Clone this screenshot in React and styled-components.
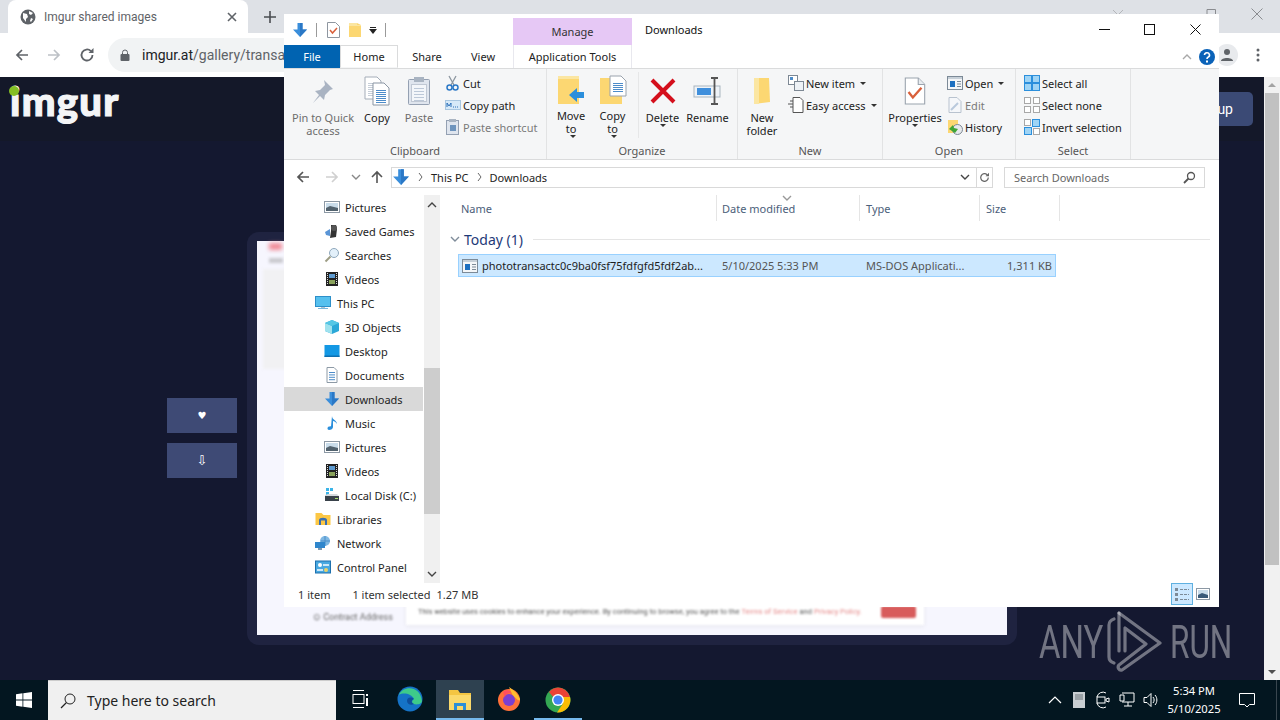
import React from 'react';
import styled, { createGlobalStyle } from 'styled-components';

const Global = createGlobalStyle`
  html, body { margin: 0; padding: 0; overflow: hidden; background: #141829; }
  * { box-sizing: border-box; }
`;

const uiFont = '"Noto Sans", "Open Sans", sans-serif';
const chromeFont = 'Roboto, "Liberation Sans", sans-serif';

const Screen = styled.div`
  position: relative;
  width: 1280px;
  height: 720px;
  display: flex;
  flex-direction: column;
  overflow: hidden;
`;

/* browser behind the explorer window */
const Browser = styled.div`
  height: 680px;
  display: flex;
  flex-direction: column;
  font-family: ${chromeFont};
`;
const TabStrip = styled.div`
  height: 33px;
  background: #dee1e6;
  display: flex;
  align-items: stretch;
  padding-left: 8px;
  position: relative;
`;
const Tab = styled.div`
  width: 240px;
  background: #fff;
  border-radius: 8px 8px 0 0;
  display: flex;
  align-items: center;
  padding: 0 11px 0 12px;
  gap: 8px;
  color: #5f6368;
  font-size: 12px;
`;
const TabTitle = styled.span`
  flex: 1;
`;
const NewTab = styled.div`
  width: 44px;
  display: flex;
  align-items: center;
  justify-content: center;
`;
const WinPeek = styled.div`
  margin: 9px ${p => p.$mr}px 0 ${p => (p.$first ? 'auto' : '0')};
  height: 6px;
  display: flex;
`;
const WinClose = styled.div`
  width: 46px;
  display: flex;
  align-items: center;
  justify-content: center;
  padding-bottom: 6px;
`;
const Toolbar = styled.div`
  height: 44px;
  background: #fff;
  display: flex;
  align-items: center;
  padding: 0 20px 0 15px;
`;
const NavIcon = styled.div`
  width: 32px;
  display: flex;
  justify-content: flex-start;
  align-items: center;
`;
const UrlPill = styled.div`
  margin-left: -3px;
  flex: 1;
  height: 34px;
  border-radius: 17px;
  background: #f1f3f4;
  display: flex;
  align-items: center;
  padding-left: 12px;
  gap: 12px;
  font-size: 14px;
  color: #202124;
`;
const UrlRest = styled.span`
  color: #5f6368;
`;
const Avatar = styled.div`
  width: 22px;
  height: 22px;
  margin: 0 18px 0 8px;
  border-radius: 50%;
  background: #e8eaed;
  display: flex;
  align-items: center;
  justify-content: center;
`;
const Page = styled.div`
  flex: 1;
  display: flex;
  background: #141830;
  min-height: 0;
`;
const PageBody = styled.div`
  flex: 1;
  display: flex;
  flex-direction: column;
  min-width: 0;
`;
const PageHeader = styled.div`
  height: 64px;
  background: #141829;
  display: flex;
  align-items: flex-start;
  justify-content: space-between;
  padding: 9px 11px 0 10px;
`;
const Logo = styled.div`
  position: relative;
  font-family: Lato, sans-serif;
  font-weight: 900;
  font-size: 40px;
  line-height: 30px;
  color: #f4f5f7;
  letter-spacing: 1.3px;
  -webkit-text-stroke: 1.2px #f4f5f7;
`;
const LogoDot = styled.i`
  position: absolute;
  left: -1px;
  top: 0;
  width: 10px;
  height: 10px;
  border-radius: 50%;
  background: #85bf25;
`;
const SignUp = styled.div`
  width: 90px;
  height: 34px;
  margin-top: 6px;
  border-radius: 5px;
  background: #3b4a75;
  color: #fff;
  font-size: 14px;
  display: flex;
  align-items: center;
  justify-content: flex-end;
  padding-right: 20px;
`;
const PageMain = styled.div`
  flex: 1;
  display: flex;
  padding: 91px 0 35px 167px;
`;
const SideButtons = styled.div`
  width: 70px;
  display: flex;
  flex-direction: column;
  gap: 10px;
  margin-top: 166px;
`;
const SideButton = styled.div`
  height: 35px;
  background: #3e4a75;
  color: #fff;
  font-size: ${p => p.$fs}px;
  font-family: "DejaVu Sans", sans-serif;
  display: flex;
  align-items: center;
  justify-content: center;
`;
const Card = styled.div`
  width: 770px;
  margin-left: 10px;
  border-radius: 12px;
  background: #1f2340;
  padding: 9px 10px 10px;
  display: flex;
`;
const Shot = styled.div`
  flex: 1;
  background: #f6f6fe;
  display: flex;
  flex-direction: column;
  padding: 2px 0 10px;
  font-family: ${chromeFont};
`;
const Blob = styled.div`
  width: ${p => p.$w}px;
  height: ${p => p.$h}px;
  background: ${p => p.$c};
  margin: 0 0 ${p => p.$mb || 0}px ${p => p.$ml}px;
  filter: blur(${p => p.$b || 1.5}px);
`;
const ShotBottom = styled.div`
  margin-top: auto;
  display: flex;
  align-items: flex-end;
  padding-left: 56px;
`;
const BlurLabel = styled.div`
  font-size: 9px;
  color: #666;
  width: 93px;
  filter: blur(0.8px);
  padding-bottom: 3px;
`;
const Cookie = styled.div`
  width: 518px;
  height: 27px;
  background: #fff;
  box-shadow: 0 1px 5px rgba(0, 0, 0, 0.08);
  display: flex;
  align-items: center;
  padding: 0 8px 0 12px;
  font-size: 7.5px;
  color: #555;
  filter: blur(0.8px);
  white-space: nowrap;
`;
const CookieLink = styled.span`
  color: #e58a8a;
  margin: 0 2px;
`;
const CookieBtn = styled.div`
  width: 35px;
  height: 12px;
  margin-left: auto;
  background: #d85c5c;
  border-radius: 2px;
`;
const PageScroll = styled.div`
  width: 16px;
  background: #f1f1f1;
  display: flex;
  flex-direction: column;
  align-items: center;
  padding-top: 6px;
`;
const PageThumb = styled.div`
  width: 14px;
  height: 472px;
  margin-top: 6px;
  background: #c1c1c1;
`;
const PageArrow = styled.div`
  width: 0;
  height: 0;
  border-left: 4px solid transparent;
  border-right: 4px solid transparent;
  ${p => (p.$down ? 'border-top: 4px solid #505050; margin-top: auto; margin-bottom: 6px;' : 'border-bottom: 4px solid #a3a3a3;')}
`;

/* watermark */
const Watermark = styled.div`
  position: absolute;
  left: 1039px;
  top: 610px;
  width: 191px;
  height: 62px;
  display: flex;
  align-items: center;
  justify-content: space-between;
  font-family: Roboto, sans-serif;
  font-weight: 400;
  font-size: 47px;
  color: rgba(255, 255, 255, 0.4);
  pointer-events: none;
`;
const Narrow = styled.span`
  display: inline-block;
  transform: scaleX(${p => p.$x});
  transform-origin: left center;
  width: ${p => p.$w}px;
  white-space: nowrap;
`;

/* explorer */
const Explorer = styled.div`
  position: absolute;
  left: 284px;
  top: 14px;
  width: 935px;
  height: 593px;
  background: #fff;
  font-family: ${uiFont};
  font-size: 11px;
  color: #1e1e1e;
  display: flex;
  flex-direction: column;
`;
const TitleBar = styled.div`
  height: 31px;
  display: flex;
  align-items: flex-start;
`;
const QuickAccess = styled.div`
  width: 229px;
  height: 31px;
  display: flex;
  align-items: center;
  padding: 1px 0 0 8px;
`;
const QaSlot = styled.div`
  width: ${p => p.$w}px;
  display: flex;
  align-items: center;
  justify-content: center;
`;
const QaSep = styled.div`
  width: 1px;
  height: 14px;
  background: #9a9a9a;
  margin: 0 ${p => p.$m}px;
`;
const ManageTab = styled.div`
  width: 119px;
  height: 27px;
  margin-top: 4px;
  background: #e6c8f5;
  display: flex;
  align-items: center;
  justify-content: center;
  color: #333;
`;
const TitleText = styled.div`
  margin: 8px 0 0 13px;
  color: #111;
`;
const WinControls = styled.div`
  margin-left: auto;
  display: flex;
  margin-right: 1px;
`;
const WinBtn = styled.div`
  width: 45.5px;
  height: 31px;
  display: flex;
  align-items: center;
  justify-content: center;
`;
const RibbonTabs = styled.div`
  height: 23px;
  display: flex;
  align-items: stretch;
`;
const RibbonTab = styled.div`
  width: ${p => p.$w}px;
  display: flex;
  align-items: center;
  justify-content: center;
  color: ${p => (p.$file ? '#fff' : '#222')};
  background: ${p => (p.$file ? '#0063b1' : '#fff')};
  border: ${p => (p.$active ? '1px solid #dadbdc' : 'none')};
  border-bottom: ${p => (p.$active ? '1px solid #f5f6f7' : 'none')};
  ${p => p.$gap && 'margin-left: 3px; border-left: 1px solid #e8e8ee; border-right: 1px solid #e8e8ee;'}
`;
const RibbonRight = styled.div`
  margin-left: auto;
  display: flex;
  align-items: center;
  gap: 7px;
  padding-right: 4px;
`;
const Ribbon = styled.div`
  height: 92px;
  background: #f5f6f7;
  border-bottom: 1px solid #dadbdc;
  border-top: 1px solid #dadbdc;
  display: flex;
`;
const Group = styled.div`
  width: ${p => p.$w}px;
  display: flex;
  flex-direction: column;
  border-right: 1px solid #e2e3e4;
`;
const GroupBody = styled.div`
  height: 74px;
  display: flex;
  padding: 3px 0 0 ${p => p.$pl || 0}px;
`;
const GroupLabel = styled.div`
  text-align: center;
  color: #555;
  line-height: 16px;
`;
const BigBtn = styled.div`
  width: ${p => p.$w}px;
  display: flex;
  flex-direction: column;
  align-items: center;
  text-align: center;
  line-height: 13px;
  white-space: nowrap;
  color: ${p => (p.$dim ? '#6d6d6d' : '#222')};
  ${p => p.$sep && 'border-right: 1px solid #e6e7e8; padding-right: 4px;'}
  height: 66px;
`;
const BigIcon = styled.div`
  height: 38px;
  display: flex;
  align-items: center;
  justify-content: center;
  margin-bottom: 1px;
`;
const Caret = styled.span`
  display: inline-block;
  width: 0;
  height: 0;
  border-left: 3px solid transparent;
  border-right: 3px solid transparent;
  border-top: 3px solid #333;
  vertical-align: middle;
  margin-left: ${p => p.$ml ?? 3}px;
`;
const SmallCol = styled.div`
  display: flex;
  flex-direction: column;
  margin-left: ${p => p.$ml || 0}px;
`;
const SmallBtn = styled.div`
  height: 22px;
  display: flex;
  align-items: center;
  gap: 2px;
  white-space: nowrap;
  color: ${p => (p.$dim ? '#7a7a7a' : '#222')};
`;
const SmallIcon = styled.div`
  width: 17px;
  height: 16px;
  display: flex;
  align-items: center;
  justify-content: center;
`;
const AddressRow = styled.div`
  height: 35px;
  display: flex;
  align-items: center;
  padding-bottom: 1px;
`;
const AddrNav = styled.div`
  width: ${p => p.$w}px;
  display: flex;
  justify-content: center;
`;
const AddrBox = styled.div`
  width: 586px;
  height: 21px;
  margin-left: 7px;
  border: 1px solid #d9d9d9;
  display: flex;
  align-items: center;
  gap: 8px;
`;
const Crumb = styled.span`
  color: #222;
`;
const AddrEnd = styled.div`
  margin-left: auto;
  width: 22px;
  display: flex;
  justify-content: center;
`;
const Refresh = styled.div`
  width: 16px;
  height: 21px;
  border: 1px solid #d9d9d9;
  border-left: none;
  display: flex;
  align-items: center;
  justify-content: center;
`;
const SearchBox = styled.div`
  width: 201px;
  height: 21px;
  margin-left: 11px;
  border: 1px solid #d9d9d9;
  display: flex;
  align-items: center;
  justify-content: space-between;
  padding: 0 8px 0 9px;
  color: #666;
`;
const Content = styled.div`
  flex: 1;
  display: flex;
  min-height: 0;
`;
const NavPane = styled.div`
  width: 140px;
  padding-right: 1px;
`;
const NavRow = styled.div`
  height: 24px;
  display: flex;
  align-items: center;
  padding-left: ${p => (p.$sub ? 40 : 31)}px;
  gap: ${p => (p.$sub ? 5 : 6)}px;
  background: ${p => (p.$on ? '#d9d9d9' : 'transparent')};
  white-space: nowrap;
`;
const NavScroll = styled.div`
  width: 16px;
  background: #f0f0f0;
  display: flex;
  flex-direction: column;
  align-items: center;
  padding: 7px 0 6px;
`;
const NavThumb = styled.div`
  width: 16px;
  height: 146px;
  margin-top: 160px;
  background: #cdcdcd;
`;
const NavDown = styled.div`
  margin-top: auto;
  display: flex;
`;
const ListPane = styled.div`
  flex: 1;
`;
const HeaderRow = styled.div`
  height: 26px;
  display: grid;
  grid-template-columns: 277px 143px 120px 80px;
  color: #4c607a;
  position: relative;
`;
const HeaderCell = styled.div`
  display: flex;
  align-items: center;
  padding-left: ${p => p.$pl}px;
  border-right: 1px solid #e5e5e5;
`;
const SortMark = styled.div`
  position: absolute;
  left: 342px;
  top: 0;
  display: flex;
`;
const GroupRow = styled.div`
  height: 26px;
  display: flex;
  align-items: center;
  margin-top: 5px;
  padding: 0 9px 0 10px;
  gap: 4px;
`;
const GroupName = styled.span`
  font-size: 14px;
  color: #1e3a78;
  white-space: nowrap;
`;
const GroupLine = styled.div`
  flex: 1;
  height: 1px;
  background: #e5e5e5;
  margin-left: 6px;
`;
const FileRow = styled.div`
  width: 598px;
  height: 23px;
  margin: 2px 0 0 18px;
  background: #cce8ff;
  border: 1px solid #99d1ff;
  display: grid;
  grid-template-columns: 263px 144px 120px 1fr;
  align-items: center;
  white-space: nowrap;
`;
const FileName = styled.div`
  display: flex;
  align-items: center;
  gap: 4px;
  padding-left: 3px;
  overflow: hidden;
`;
const FileMeta = styled.div`
  color: #555;
  text-align: ${p => (p.$right ? 'right' : 'left')};
  padding-right: ${p => (p.$right ? 3 : 0)}px;
`;
const StatusBar = styled.div`
  height: 24px;
  display: flex;
  align-items: center;
  padding: 0 8px 2px 14px;
  color: #333;
`;
const StatusItem = styled.span`
  margin-right: ${p => p.$mr}px;
`;
const ViewBtn = styled.div`
  width: ${p => p.$w}px;
  height: 22px;
  display: flex;
  align-items: center;
  justify-content: center;
  margin-left: ${p => (p.$on ? 'auto' : '2px')};
  background: ${p => (p.$on ? '#cce8ff' : 'transparent')};
  border: ${p => (p.$on ? '1px solid #5fb0e0' : 'none')};
`;

/* taskbar */
const Taskbar = styled.div`
  height: 40px;
  background: #031620;
  display: flex;
  align-items: stretch;
  color: #fff;
`;
const StartBtn = styled.div`
  width: 48px;
  display: flex;
  align-items: center;
  justify-content: center;
`;
const SearchBar = styled.div`
  width: 288px;
  background: #f0f0f0;
  border-top: 1px solid #ccc;
  display: flex;
  align-items: center;
  padding-left: 12px;
  gap: 11px;
  color: #222;
  font-family: ${uiFont};
  font-size: 14px;
`;
const TaskItem = styled.div`
  width: ${p => p.$w || 48}px;
  display: flex;
  align-items: center;
  justify-content: center;
  background: ${p => (p.$on ? '#2e4150' : 'transparent')};
  border-bottom: 2px solid ${p => (p.$mark ? '#76b9ed' : 'transparent')};
  padding-top: ${p => (p.$mark ? 2 : 0)}px;
`;
const Tray = styled.div`
  margin-left: auto;
  display: flex;
  align-items: center;
  padding-right: 3px;
`;
const TrayIcon = styled.div`
  width: 24px;
  display: flex;
  justify-content: center;
`;
const Clock = styled.div`
  width: 62px;
  text-align: center;
  font-family: ${uiFont};
  font-size: 11.2px;
  line-height: 18px;
`;
const Notify = styled.div`
  width: 44px;
  display: flex;
  justify-content: center;
  height: 40px;
  align-items: center;
`;
const ShowDesktop = styled.div`
  width: 8px;
  height: 40px;
  border-right: 1px solid #39464f;
`;

const Ico = ({ w = 16, h = 16, children }) => (
  <svg width={w} height={h} viewBox={`0 0 ${w} ${h}`} fill="none">{children}</svg>
);

const DownArrow = ({ s = 16 }) => (
  <svg width={s} height={s} viewBox="0 0 16 16">
    <path d="M5.500 1h5v6.500H15L8 15 1 7.500h4.500z" fill="#3a8edb" />
    <path d="M8 1h2.500v6.500H15L8 15z" fill="#2b78c6" />
  </svg>
);
const Folder = ({ w = 14, h = 16 }) => (
  <svg width={w} height={h} viewBox="0 0 14 16">
    <path d="M1 1h8l4 2v12H1z" fill="#fcd772" />
    <path d="M1 1h8v2h4v1H1z" fill="#fbe6a2" />
  </svg>
);
const PageSheet = ({ children, w = 20, h = 26 }) => (
  <svg width={w} height={h} viewBox="0 0 20 26">
    <path d="M1 1h12l6 6v18H1z" fill="#fff" stroke="#9aa3ad" />
    <path d="M13 1v6h6" fill="#e8ecf0" stroke="#9aa3ad" />
    {children}
  </svg>
);
const Lines = ({ x, y, n, w = 10, c = '#7fa7cf', gap = 2 }) => (
  <g>
    {Array.from({ length: n }).map((_, i) => (
      <rect key={i} x={x} y={y + i * gap} width={w} height="1" fill={c} />
    ))}
  </g>
);
const CopyIcon = () => (
  <svg width="26" height="30" viewBox="0 0 26 30">
    <path d="M1 1h12l4 4v18H1z" fill="#fff" stroke="#a4adb8" />
    <Lines x={4} y={7} n={7} w={9} c="#c6ced8" />
    <path d="M9 7h11l5 5v17H9z" fill="#fff" stroke="#8a95a3" />
    <Lines x={12} y={14} n={7} w={10} c="#4d8cc9" />
  </svg>
);
const PasteIcon = () => (
  <svg width="24" height="30" viewBox="0 0 24 30">
    <rect x="1.500" y="3.500" width="21" height="25" rx="1" fill="#dfe5ee" stroke="#94a0b2" />
    <rect x="7" y="1" width="10" height="5" fill="#a9b4c2" />
    <rect x="4.500" y="8.500" width="15" height="17" fill="#f3f6fa" stroke="#c0c8d4" />
    <Lines x={7} y={12} n={5} w={10} c="#bcc8d8" gap={3} />
  </svg>
);

const navIcons = {
  pictures: (
    <Ico>
      <rect x=".5" y="2.500" width="15" height="11" fill="#fff" stroke="#8c98a4" />
      <rect x="2" y="4" width="12" height="8" fill="#c9dcea" />
      <path d="M2 9l4-2 8 2v3H2z" fill="#52626e" />
    </Ico>
  ),
  games: (
    <Ico>
      <path d="M1 9l5-3v7l-4-1z" fill="#5a95d6" />
      <path d="M7 2h5l1 4-1 8-6 1 1-7z" fill="#333" />
      <circle cx="10" cy="5" r="3" fill="#555" />
    </Ico>
  ),
  search: (
    <Ico>
      <circle cx="10" cy="6" r="4.500" fill="#e3f0fa" stroke="#8fa8bc" />
      <path d="M6.500 9.500L1.500 14.500" stroke="#9d9d85" strokeWidth="2" />
    </Ico>
  ),
  videos: (
    <Ico>
      <rect x="2" y="1" width="12" height="14" fill="#222" />
      <rect x="5" y="3" width="6" height="4" fill="#5e9bd1" />
      <rect x="5" y="9" width="6" height="4" fill="#8aa35b" />
      <Lines x={3} y={2} n={6} w={1} c="#ddd" gap={2} />
      <Lines x={12} y={2} n={6} w={1} c="#ddd" gap={2} />
    </Ico>
  ),
  pc: (
    <Ico>
      <rect x=".5" y="1.500" width="15" height="10" fill="#56c0ee" stroke="#2d8fc9" />
      <rect x="3" y="13" width="10" height="1" fill="#79b6db" />
      <rect x="6" y="12" width="4" height="1" fill="#b5c5d0" />
    </Ico>
  ),
  objects: (
    <Ico>
      <path d="M8 1l7 3v8l-7 3-7-3V4z" fill="#2ba8d8" />
      <path d="M1 4l7 3v8l-7-3z" fill="#9fe2ee" />
      <path d="M8 1l7 3-7 3-7-3z" fill="#55c7e5" />
    </Ico>
  ),
  desktop: (
    <Ico>
      <rect x=".5" y="2" width="15" height="12" fill="#1398e4" />
      <rect x=".5" y="12.500" width="15" height="1.500" fill="#0d6fb0" />
    </Ico>
  ),
  documents: (
    <Ico>
      <path d="M3 .5h7l3 3v12H3z" fill="#fff" stroke="#8d9aa6" />
      <Lines x={5} y={5} n={4} w={6} c="#4d8cc9" gap={2.400} />
    </Ico>
  ),
  downloads: <DownArrow />,
  music: (
    <Ico>
      <path d="M8 1c0 4 5 4 5 8-1-2-3-3-4-3v6c0 2-2 3-4 3s-2-3 0-3.500c1-.3 2-.3 2-.3z" fill="#2b8fdc" />
    </Ico>
  ),
  disk: (
    <Ico>
      <rect x="2" y="1" width="3" height="3" fill="#3ab4e8" />
      <rect x="6" y="1" width="3" height="3" fill="#3ab4e8" />
      <rect x="2" y="5" width="3" height="3" fill="#3ab4e8" />
      <path d="M1 9h14v5H1z" fill="#39424a" />
      <path d="M1 8l3-1h9l2 2H1z" fill="#d5dade" />
      <rect x="11" y="11" width="3" height="1" fill="#a8e070" />
    </Ico>
  ),
  libraries: (
    <Ico>
      <path d="M.5 2h6l2 2h7v10H.5z" fill="#fcc745" />
      <path d="M4 14V9c0-3 8-3 8 0v5h-2V9.500H6V14z" fill="#3a6fb0" />
    </Ico>
  ),
  network: (
    <Ico>
      <circle cx="10" cy="6" r="5" fill="#7fb8e3" />
      <path d="M6 6h9M10 1v10" stroke="#4a8dc8" />
      <rect x="0" y="7" width="10" height="6" fill="#2f86cc" />
      <rect x="3" y="13" width="4" height="2" fill="#7b98b0" />
    </Ico>
  ),
  panel: (
    <Ico>
      <rect x=".5" y="2" width="15" height="12" fill="#48a8e0" stroke="#1e70ad" />
      <circle cx="5" cy="6" r="2" fill="#fff" />
      <rect x="8" y="5" width="6" height="2" fill="#cde8f8" />
      <circle cx="11" cy="11" r="2" fill="#e9d26a" />
      <rect x="2" y="10" width="6" height="2" fill="#cde8f8" />
    </Ico>
  ),
};

const navItems = [
  ['pictures', 'Pictures', 1],
  ['games', 'Saved Games', 1],
  ['search', 'Searches', 1],
  ['videos', 'Videos', 1],
  ['pc', 'This PC', 0],
  ['objects', '3D Objects', 1],
  ['desktop', 'Desktop', 1],
  ['documents', 'Documents', 1],
  ['downloads', 'Downloads', 1, true],
  ['music', 'Music', 1],
  ['pictures', 'Pictures', 1],
  ['videos', 'Videos', 1],
  ['disk', 'Local Disk (C:)', 1],
  ['libraries', 'Libraries', 0],
  ['network', 'Network', 0],
  ['panel', 'Control Panel', 0],
];

const Chevron = ({ up, c = '#555' }) => (
  <svg width="10" height="6" viewBox="0 0 10 6">
    <path d={up ? 'M1 5l4-4 4 4' : 'M1 1l4 4 4-4'} stroke={c} strokeWidth="1.400" fill="none" />
  </svg>
);
const Chevronlet = () => (
  <svg width="5" height="8" viewBox="0 0 5 8">
    <path d="M1 0l3 4-3 4" stroke="#666" fill="none" />
  </svg>
);
const ArrowLeft = ({ c, s = 14 }) => (
  <svg width={s} height={s} viewBox="0 0 14 14">
    <path d="M13 7H2M7 2L2 7l5 5" stroke={c} strokeWidth="1.700" fill="none" />
  </svg>
);
const ArrowRight = ({ c, s = 14 }) => (
  <svg width={s} height={s} viewBox="0 0 14 14">
    <path d="M1 7h11M7 2l5 5-5 5" stroke={c} strokeWidth="1.700" fill="none" />
  </svg>
);
const Reload = ({ c = '#5f6368', s = 16 }) => (
  <svg width={s} height={s} viewBox="0 0 16 16">
    <path d="M13.500 8a5.500 5.500 0 1 1-1.600-3.900" stroke={c} strokeWidth="1.800" fill="none" />
    <path d="M14.500 1v5h-5z" fill={c} />
  </svg>
);
const ExeIcon = () => (
  <svg width="16" height="14" viewBox="0 0 16 14">
    <rect x=".5" y=".5" width="15" height="13" fill="#f4f6f8" stroke="#7c8a97" />
    <rect x="1" y="1" width="14" height="2" fill="#c7d0d8" />
    <rect x="3" y="5" width="5" height="6" fill="#1c6fc0" />
    <Lines x={10} y={5} n={3} w={4} c="#7c8a97" gap={2.500} />
  </svg>
);

function App() {
  return (
    <Screen>
      <Global />
      <Browser>
        <TabStrip>
          <Tab>
            <svg width="16" height="16" viewBox="0 0 16 16">
              <circle cx="8" cy="8" r="7.500" fill="#5f6368" />
              <path d="M3 4l4 1 1 3-2 2v3L3 9zM9 2l4 2-2 2-2-1zM11 9l2 1-2 3-1-1z" fill="#fff" />
            </svg>
            <TabTitle>Imgur shared images</TabTitle>
            <svg width="10" height="10" viewBox="0 0 10 10">
              <path d="M1 1l8 8M9 1l-8 8" stroke="#5f6368" strokeWidth="1.600" />
            </svg>
          </Tab>
          <NewTab>
            <svg width="12" height="12" viewBox="0 0 12 12">
              <path d="M6 0v12M0 6h12" stroke="#4a4d52" strokeWidth="1.600" />
            </svg>
          </NewTab>
          <WinPeek $first $mr={82}>
            <svg width="10" height="6" viewBox="0 0 10 6">
              <path d="M0 1l4 4M10 1L6 5" stroke="#b4b6ba" />
            </svg>
          </WinPeek>
          <WinPeek $mr={18}>
            <svg width="11" height="6" viewBox="0 0 11 6">
              <path d="M2 6V.5h8.500V6" stroke="#8a8c90" fill="none" />
            </svg>
          </WinPeek>
          <WinClose>
            <svg width="12" height="12" viewBox="0 0 12 12">
              <path d="M.5.5l11 11M11.500.5l-11 11" stroke="#8a8c90" />
            </svg>
          </WinClose>
        </TabStrip>
        <Toolbar>
          <NavIcon><ArrowLeft c="#5f6368" /></NavIcon>
          <NavIcon><ArrowRight c="#bdc1c6" /></NavIcon>
          <NavIcon><Reload /></NavIcon>
          <UrlPill>
            <svg width="10" height="12" viewBox="0 0 10 12">
              <path d="M2.500 5V3.500a2.500 2.500 0 0 1 5 0V5" stroke="#5f6368" fill="none" />
              <rect x="0.500" y="5" width="9" height="7" rx="1" fill="#5f6368" />
            </svg>
            <span>imgur.at<UrlRest>/gallery/transa</UrlRest></span>
          </UrlPill>
          <Avatar>
            <svg width="14" height="14" viewBox="0 0 14 14">
              <circle cx="7" cy="4" r="3" fill="#5f6368" />
              <path d="M1 13c0-4 12-4 12 0z" fill="#5f6368" />
            </svg>
          </Avatar>
          <svg width="4" height="14" viewBox="0 0 4 14">
            <circle cx="2" cy="2" r="1.500" fill="#5f6368" />
            <circle cx="2" cy="7" r="1.500" fill="#5f6368" />
            <circle cx="2" cy="12" r="1.500" fill="#5f6368" />
          </svg>
        </Toolbar>
        <Page>
          <PageBody>
            <PageHeader>
              <Logo>
                imgur
                <LogoDot />
              </Logo>
              <SignUp>up</SignUp>
            </PageHeader>
            <PageMain>
              <SideButtons>
                <SideButton $fs={10}>♥</SideButton>
                <SideButton $fs={13}>⇩</SideButton>
              </SideButtons>
              <Card>
                <Shot>
                  <Blob $ml={12} $w={13} $h={7} $c="#f08a96" $mb={8} $b={2} />
                  <Blob $ml={12} $w={14} $h={5} $c="#c9c9ce" $mb={6} />
                  <Blob $ml={6} $w={30} $h={100} $c="#f1f1f3" />
                  <ShotBottom>
                    <BlurLabel>⊙ Contract Address</BlurLabel>
                    <Cookie>
                      This website uses cookies to enhance your experience. By continuing to browse, you agree to the
                      <CookieLink>Terms of Service</CookieLink> and <CookieLink>Privacy Policy.</CookieLink>
                      <CookieBtn />
                    </Cookie>
                  </ShotBottom>
                </Shot>
              </Card>
            </PageMain>
          </PageBody>
          <PageScroll>
            <PageArrow />
            <PageThumb />
            <PageArrow $down />
          </PageScroll>
        </Page>
      </Browser>

      <Taskbar>
        <StartBtn>
          <svg width="16" height="16" viewBox="0 0 16 16">
            <path d="M0 2.200l6.500-.9v6.300H0zM7.300 1.200L16 0v7.600H7.300zM0 8.400h6.500v6.300L0 13.800zM7.300 8.400H16V16l-8.700-1.200z" fill="#fff" />
          </svg>
        </StartBtn>
        <SearchBar>
          <svg width="16" height="16" viewBox="0 0 16 16">
            <circle cx="10" cy="6" r="5" stroke="#222" fill="none" />
            <path d="M6.500 9.500L1 15" stroke="#222" strokeWidth="1.200" />
          </svg>
          Type here to search
        </SearchBar>
        <TaskItem $w={48}>
          <svg width="16" height="18" viewBox="0 0 16 18">
            <path d="M1 .5h11M1 17.500h11" stroke="#fff" />
            <rect x="1" y="4.500" width="11" height="9" stroke="#fff" fill="none" />
            <rect x="14" y="4" width="2" height="2" fill="#fff" />
            <rect x="14" y="8" width="2" height="8" fill="#fff" />
          </svg>
        </TaskItem>
        <TaskItem $w={52}>
          <svg width="26" height="26" viewBox="0 0 26 26">
            <circle cx="13" cy="13" r="12.500" fill="#1573c7" />
            <path d="M2 9c3-9 21-11 23 6 0 3-5 4-8 3-3-1-2-4 0-5-2-5-11-7-15-4z" fill="#3ecb8a" />
            <path d="M10 15c0-3 3-5 7-2-3 1-3 4 0 5-3 2-7 0-7-3z" fill="#0e4f9c" />
          </svg>
        </TaskItem>
        <TaskItem $w={48} $on $mark>
          <svg width="24" height="22" viewBox="0 0 24 22">
            <path d="M1 1h9l2 3h11v17H1z" fill="#f4c542" />
            <path d="M1 6h22v15H1z" fill="#fbd96b" />
            <path d="M6 21v-7h12v7h-3v-4H9v4z" fill="#2c8fd8" />
          </svg>
        </TaskItem>
        <TaskItem $w={50}>
          <svg width="24" height="26" viewBox="0 0 24 26">
            <circle cx="12" cy="14" r="11" fill="#ff7139" />
            <path d="M12 1c5 3 9 7 11 12 0 4-4-1-7-3z" fill="#ffbd30" />
            <circle cx="12" cy="14" r="6" fill="#7b3fd0" />
            <path d="M6 6c3-3 7-2 8 1-3 0-6 1-6 5z" fill="#ff4f5e" />
          </svg>
        </TaskItem>
        <TaskItem $w={48} $mark>
          <svg width="26" height="26" viewBox="0 0 26 26">
            <circle cx="13" cy="13" r="12.500" fill="#34a853" />
            <path d="M13 .5A12.500 12.500 0 0 1 25 10H13a3 3 0 0 0-4 1L4 5A12.500 12.500 0 0 1 13 .5z" fill="#ea4335" />
            <path d="M25 10a12.500 12.500 0 0 1-13 15.500l6-9 -5-6.500z" fill="#fbbc05" />
            <circle cx="13" cy="13" r="6" fill="#fff" />
            <circle cx="13" cy="13" r="4.600" fill="#4285f4" />
          </svg>
        </TaskItem>
        <Tray>
          <TrayIcon>
            <svg width="14" height="8" viewBox="0 0 14 8">
              <path d="M1 7l6-6 6 6" stroke="#fff" strokeWidth="1.200" fill="none" />
            </svg>
          </TrayIcon>
          <TrayIcon>
            <svg width="12" height="16" viewBox="0 0 12 16">
              <rect width="12" height="16" fill="#c9ced2" />
              <rect x="2" y="2" width="8" height="6" fill="#9aa1a6" />
            </svg>
          </TrayIcon>
          <TrayIcon>
            <svg width="14" height="18" viewBox="0 0 14 18">
              <path d="M1 6a6 6 0 0 1 9-4M1 12a6 6 0 0 0 9 4" stroke="#fff" fill="none" />
              <rect x="1" y="6" width="8" height="6" stroke="#fff" fill="none" />
              <path d="M10 8l3-1v4l-3-1z" stroke="#fff" fill="none" />
            </svg>
          </TrayIcon>
          <TrayIcon>
            <svg width="16" height="16" viewBox="0 0 16 16">
              <path d="M3 1h12v9H3M1 3h4v6H1zM9 10v4M5 14h8" stroke="#fff" fill="none" />
            </svg>
          </TrayIcon>
          <TrayIcon>
            <svg width="16" height="14" viewBox="0 0 16 14">
              <path d="M1 4.500h3l4-4v13l-4-4H1zM10 4c1.500 2 1.500 4 0 6M12 2c2.500 3 2.500 7 0 10" stroke="#fff" fill="none" />
            </svg>
          </TrayIcon>
          <Clock>5:34 PM<br />5/10/2025</Clock>
          <Notify>
            <svg width="16" height="16" viewBox="0 0 16 16">
              <path d="M.5 1.500h15v11h-5L8 15l-2.500-2.500h-5z" stroke="#fff" fill="none" />
            </svg>
          </Notify>
          <ShowDesktop />
        </Tray>
      </Taskbar>

      <Watermark>
        <Narrow $x={0.7} $w={62}>ANY</Narrow>
        <svg width="62" height="62" viewBox="0 0 62 62" fill="none" stroke="rgba(255,255,255,.4)" strokeWidth="3.200" strokeLinejoin="round" strokeLinecap="round">
          <path d="M9 9C6 10 4 12 4 15v32c0 3 2 5 5 6" />
          <path d="M14 3l41 30-38 27c-3 1-5-3-3-5l27-21L20 18v23" />
          <path d="M14 3v38" />
        </svg>
        <Narrow $x={0.67} $w={60}>RUN</Narrow>
      </Watermark>

      <Explorer>
        <TitleBar>
          <QuickAccess>
            <QaSlot $w={16}><DownArrow /></QaSlot>
            <QaSep $m={8} />
            <QaSlot $w={16}>
              <svg width="13" height="16" viewBox="0 0 13 16">
                <path d="M.5.5h8l4 4v11H.5z" fill="#fff" stroke="#8e96a0" />
                <path d="M3 8l2.500 3L10 6" stroke="#d9603b" strokeWidth="1.500" fill="none" />
              </svg>
            </QaSlot>
            <QaSlot $w={28}><Folder /></QaSlot>
            <QaSlot $w={8}>
              <svg width="8" height="7" viewBox="0 0 8 7">
                <rect x="1" width="6" height="1" fill="#222" />
                <path d="M0 2h8L4 7z" fill="#222" />
              </svg>
            </QaSlot>
            <QaSep $m={8} />
          </QuickAccess>
          <ManageTab>Manage</ManageTab>
          <TitleText>Downloads</TitleText>
          <WinControls>
            <WinBtn>
              <svg width="11" height="1" viewBox="0 0 11 1"><rect width="11" height="1" fill="#111" /></svg>
            </WinBtn>
            <WinBtn>
              <svg width="11" height="11" viewBox="0 0 11 11"><rect x=".5" y=".5" width="10" height="10" stroke="#111" fill="none" /></svg>
            </WinBtn>
            <WinBtn>
              <svg width="11" height="11" viewBox="0 0 11 11"><path d="M.5.5l10 10M10.500.5l-10 10" stroke="#111" /></svg>
            </WinBtn>
          </WinControls>
        </TitleBar>
        <RibbonTabs>
          <RibbonTab $w={56} $file>File</RibbonTab>
          <RibbonTab $w={58} $active>Home</RibbonTab>
          <RibbonTab $w={58}>Share</RibbonTab>
          <RibbonTab $w={54}>View</RibbonTab>
          <RibbonTab $w={119} $gap>Application Tools</RibbonTab>
          <RibbonRight>
            <Chevron up c="#a8a8a8" />
            <svg width="16" height="16" viewBox="0 0 16 16">
              <circle cx="8" cy="8" r="8" fill="#0a62b8" />
              <path d="M5.500 6a2.500 2.300 0 1 1 3.500 2.200c-.7.4-1 .8-1 1.800" stroke="#fff" strokeWidth="1.600" fill="none" />
              <rect x="7" y="11.500" width="2" height="2" fill="#fff" />
            </svg>
          </RibbonRight>
        </RibbonTabs>
        <Ribbon>
          <Group $w={263}>
            <GroupBody $pl={8}>
              <BigBtn $w={62} $dim>
                <BigIcon>
                  <svg width="24" height="26" viewBox="0 0 24 26">
                    <path d="M13 2l9 9-3 1-5 5-1 5-4-4-7 7 6-8-4-4 5-1 5-5z" fill="#a9b3c2" />
                  </svg>
                </BigIcon>
                Pin to Quick
                <br />
                access
              </BigBtn>
              <BigBtn $w={46}><BigIcon><CopyIcon /></BigIcon>Copy</BigBtn>
              <BigBtn $w={38} $dim><BigIcon><PasteIcon /></BigIcon>Paste</BigBtn>
              <SmallCol $ml={6}>
                <SmallBtn>
                  <SmallIcon>
                    <svg width="16" height="16" viewBox="0 0 16 16">
                      <path d="M4 1l5 9M11 1l-5 9" stroke="#8c96a0" strokeWidth="1.300" />
                      <circle cx="4.500" cy="12.500" r="2.500" stroke="#2b78c6" strokeWidth="1.500" fill="none" />
                      <circle cx="10.500" cy="12.500" r="2.500" stroke="#2b78c6" strokeWidth="1.500" fill="none" />
                    </svg>
                  </SmallIcon>
                  Cut
                </SmallBtn>
                <SmallBtn>
                  <SmallIcon>
                    <svg width="16" height="10" viewBox="0 0 16 10">
                      <rect x=".5" y=".5" width="15" height="9" fill="#d6e9f8" stroke="#a8c6e0" />
                      <path d="M2 7V3l2 3 2-3v4" stroke="#2b6fb8" fill="none" />
                      <path d="M8 7h1M10 7h1M12 7h1" stroke="#2b6fb8" />
                    </svg>
                  </SmallIcon>
                  Copy path
                </SmallBtn>
                <SmallBtn $dim>
                  <SmallIcon>
                    <svg width="13" height="16" viewBox="0 0 13 16">
                      <rect x=".5" y="1.500" width="12" height="14" fill="#dfe5ee" stroke="#94a0b2" />
                      <rect x="3" y="0" width="7" height="3" fill="#a9b4c2" />
                      <rect x="4" y="6" width="6" height="6" fill="#6e94bd" />
                    </svg>
                  </SmallIcon>
                  Paste shortcut
                </SmallBtn>
              </SmallCol>
            </GroupBody>
            <GroupLabel>Clipboard</GroupLabel>
          </Group>
          <Group $w={191}>
            <GroupBody $pl={4}>
              <BigBtn $w={40}>
                <BigIcon>
                  <svg width="28" height="30" viewBox="0 0 28 30">
                    <path d="M1 1h21v28H1z" fill="#fcd772" />
                    <path d="M1 1h21v3H1z" fill="#fbe6a2" />
                    <path d="M12 20l8-7v4h7v6h-7v4z" fill="#2b8fdc" />
                  </svg>
                </BigIcon>
                Move
                <br />
                to<Caret />
              </BigBtn>
              <BigBtn $w={48} $sep>
                <BigIcon>
                  <svg width="28" height="30" viewBox="0 0 28 30">
                    <path d="M1 3h22v26H1z" fill="#fcd772" />
                    <path d="M11 1h11l5 5v15H11z" fill="#fff" stroke="#9aa3ad" />
                    <Lines x={14} y={8} n={5} w={10} c="#4d8cc9" />
                  </svg>
                </BigIcon>
                Copy
                <br />
                to<Caret />
              </BigBtn>
              <BigBtn $w={47}>
                <BigIcon>
                  <svg width="26" height="26" viewBox="0 0 26 26">
                    <path d="M2 2l22 22M24 2L2 24" stroke="#d40f1c" strokeWidth="4" />
                  </svg>
                </BigIcon>
                Delete
                <br />
                <Caret $ml={0} />
              </BigBtn>
              <BigBtn $w={43}>
                <BigIcon>
                  <svg width="30" height="28" viewBox="0 0 30 28">
                    <rect x="1" y="9" width="26" height="11" fill="#eef3f8" stroke="#a9b5c0" />
                    <rect x="4" y="11" width="14" height="7" fill="#3f8fdc" />
                    <path d="M18 1h7M18 27h7M21.500 1v26" stroke="#555" strokeWidth="1.800" />
                  </svg>
                </BigIcon>
                Rename
              </BigBtn>
            </GroupBody>
            <GroupLabel>Organize</GroupLabel>
          </Group>
          <Group $w={145}>
            <GroupBody $pl={2}>
              <BigBtn $w={44}>
                <BigIcon>
                  <svg width="20" height="28" viewBox="0 0 20 28">
                    <path d="M2 1h15l1 24-16 2z" fill="#fcd772" />
                    <path d="M2 1h5v26H2z" fill="#fbe6a2" />
                  </svg>
                </BigIcon>
                New
                <br />
                folder
              </BigBtn>
              <SmallCol $ml={3}>
                <SmallBtn>
                  <SmallIcon>
                    <svg width="16" height="16" viewBox="0 0 16 16">
                      <rect x=".5" y=".5" width="9" height="9" fill="#fff" stroke="#7d8894" />
                      <rect x="6.500" y="6.500" width="9" height="9" fill="#eef2f6" stroke="#7d8894" />
                      <rect x="2" y="2" width="3" height="3" fill="#4d8cc9" />
                    </svg>
                  </SmallIcon>
                  New item<Caret />
                </SmallBtn>
                <SmallBtn>
                  <SmallIcon>
                    <svg width="16" height="16" viewBox="0 0 16 16">
                      <path d="M5 .5h7l3 3v12H5z" fill="#fff" stroke="#555" />
                      <path d="M0 7h5M2 4h3M2 10h3" stroke="#555" />
                    </svg>
                  </SmallIcon>
                  Easy access<Caret />
                </SmallBtn>
              </SmallCol>
            </GroupBody>
            <GroupLabel>New</GroupLabel>
          </Group>
          <Group $w={133}>
            <GroupBody $pl={4}>
              <BigBtn $w={56}>
                <BigIcon>
                  <PageSheet w={22} h={28}>
                    <path d="M4 14l4 5 8-9" stroke="#d9603b" strokeWidth="2.200" fill="none" />
                  </PageSheet>
                </BigIcon>
                Properties
                <br />
                <Caret $ml={0} />
              </BigBtn>
              <SmallCol $ml={3}>
                <SmallBtn>
                  <SmallIcon><ExeIcon /></SmallIcon>
                  Open<Caret />
                </SmallBtn>
                <SmallBtn $dim>
                  <SmallIcon>
                    <svg width="14" height="16" viewBox="0 0 14 16">
                      <path d="M1 .5h8l4 4v11H1z" fill="#f5f7fa" stroke="#b9c3cf" />
                      <path d="M3 13l7-7" stroke="#b9c9dc" strokeWidth="2" />
                    </svg>
                  </SmallIcon>
                  Edit
                </SmallBtn>
                <SmallBtn>
                  <SmallIcon>
                    <svg width="16" height="16" viewBox="0 0 16 16">
                      <path d="M1 1h10v13H1z" fill="#fcd772" />
                      <circle cx="10.500" cy="10.500" r="5" fill="#e7e9ec" stroke="#7d8894" />
                      <path d="M2 10l4-4 1 3 4 1-3 4z" fill="#3fa535" />
                    </svg>
                  </SmallIcon>
                  History
                </SmallBtn>
              </SmallCol>
            </GroupBody>
            <GroupLabel>Open</GroupLabel>
          </Group>
          <Group $w={115}>
            <GroupBody $pl={7}>
              <SmallCol>
                <SmallBtn>
                  <SmallIcon>
                    <svg width="16" height="16" viewBox="0 0 16 16">
                      <rect width="16" height="16" fill="#2b8fdc" />
                      <rect x="1" y="1" width="6" height="6" fill="#9fd4f5" />
                      <rect x="9" y="1" width="6" height="6" fill="#9fd4f5" />
                      <rect x="1" y="9" width="6" height="6" fill="#9fd4f5" />
                      <rect x="9" y="9" width="6" height="6" fill="#9fd4f5" />
                    </svg>
                  </SmallIcon>
                  Select all
                </SmallBtn>
                <SmallBtn>
                  <SmallIcon>
                    <svg width="16" height="16" viewBox="0 0 16 16" fill="#fff" stroke="#a8a8a8">
                      <rect x=".5" y=".5" width="6" height="6" />
                      <rect x="9.500" y=".5" width="6" height="6" />
                      <rect x=".5" y="9.500" width="6" height="6" />
                      <rect x="9.500" y="9.500" width="6" height="6" />
                    </svg>
                  </SmallIcon>
                  Select none
                </SmallBtn>
                <SmallBtn>
                  <SmallIcon>
                    <svg width="16" height="16" viewBox="0 0 16 16">
                      <rect x=".5" y=".5" width="6" height="6" fill="#fff" stroke="#a8a8a8" />
                      <rect x="8.500" y=".5" width="7" height="7" fill="#9fd4f5" stroke="#2b8fdc" />
                      <rect x=".5" y="8.500" width="7" height="7" fill="#9fd4f5" stroke="#2b8fdc" />
                      <rect x="9.500" y="9.500" width="6" height="6" fill="#fff" stroke="#a8a8a8" />
                    </svg>
                  </SmallIcon>
                  Invert selection
                </SmallBtn>
              </SmallCol>
            </GroupBody>
            <GroupLabel>Select</GroupLabel>
          </Group>
        </Ribbon>
        <AddressRow>
          <AddrNav $w={38}><ArrowLeft c="#555" /></AddrNav>
          <AddrNav $w={20}><ArrowRight c="#d0d0d0" /></AddrNav>
          <AddrNav $w={28}><Chevron c="#888" /></AddrNav>
          <AddrNav $w={14}>
            <svg width="12" height="14" viewBox="0 0 12 14">
              <path d="M6 13V2M1 7l5-5 5 5" stroke="#555" strokeWidth="1.600" fill="none" />
            </svg>
          </AddrNav>
          <AddrBox>
            <DownArrow s={18} />
            <Chevronlet />
            <Crumb>This PC</Crumb>
            <Chevronlet />
            <Crumb>Downloads</Crumb>
            <AddrEnd><Chevron c="#444" /></AddrEnd>
          </AddrBox>
          <Refresh><Reload c="#666" s={11} /></Refresh>
          <SearchBox>
            Search Downloads
            <svg width="13" height="13" viewBox="0 0 13 13">
              <circle cx="8" cy="5" r="3.500" stroke="#555" strokeWidth="1.300" fill="none" />
              <path d="M5.500 7.500L1 12" stroke="#555" strokeWidth="1.800" />
            </svg>
          </SearchBox>
        </AddressRow>
        <Content>
          <NavPane>
            {navItems.map(([icon, label, sub, on], i) => (
              <NavRow key={i} $sub={sub} $on={on}>
                {navIcons[icon]}
                {label}
              </NavRow>
            ))}
          </NavPane>
          <NavScroll>
            <Chevron up c="#444" />
            <NavThumb />
            <NavDown><Chevron c="#444" /></NavDown>
          </NavScroll>
          <ListPane>
            <HeaderRow>
              <HeaderCell $pl={21}>Name</HeaderCell>
              <HeaderCell $pl={5}>Date modified</HeaderCell>
              <HeaderCell $pl={6}>Type</HeaderCell>
              <HeaderCell $pl={6}>Size</HeaderCell>
              <SortMark><Chevron c="#999" /></SortMark>
            </HeaderRow>
            <GroupRow>
              <Chevron c="#7f8c9a" />
              <GroupName>Today (1)</GroupName>
              <GroupLine />
            </GroupRow>
            <FileRow>
              <FileName>
                <ExeIcon />
                phototransactc0c9ba0fsf75fdfgfd5fdf2ab...
              </FileName>
              <FileMeta>5/10/2025 5:33 PM</FileMeta>
              <FileMeta>MS-DOS Applicati...</FileMeta>
              <FileMeta $right>1,311 KB</FileMeta>
            </FileRow>
          </ListPane>
        </Content>
        <StatusBar>
          <StatusItem $mr={22}>1 item</StatusItem>
          <StatusItem $mr={6}>1 item selected</StatusItem>
          <StatusItem $mr={0}>1.27 MB</StatusItem>
          <ViewBtn $w={22} $on>
            <svg width="16" height="14" viewBox="0 0 16 14">
              <rect x="1" y="1" width="3" height="3" fill="#7c8a97" />
              <rect x="1" y="6" width="3" height="3" fill="#7c8a97" />
              <rect x="1" y="11" width="3" height="3" fill="#7c8a97" />
              <path d="M6 2.500h9M6 7.500h9M6 12.500h9" stroke="#7c8a97" strokeDasharray="3 1" />
            </svg>
          </ViewBtn>
          <ViewBtn $w={16}>
            <svg width="14" height="12" viewBox="0 0 14 12">
              <rect x=".5" y=".5" width="13" height="11" fill="#fff" stroke="#8c98a4" />
              <rect x="2" y="2" width="10" height="8" fill="#c9dcea" />
              <path d="M2 7l4-2 6 2v3H2z" fill="#3a5a78" />
            </svg>
          </ViewBtn>
        </StatusBar>
      </Explorer>
    </Screen>
  );
}

export default App;
